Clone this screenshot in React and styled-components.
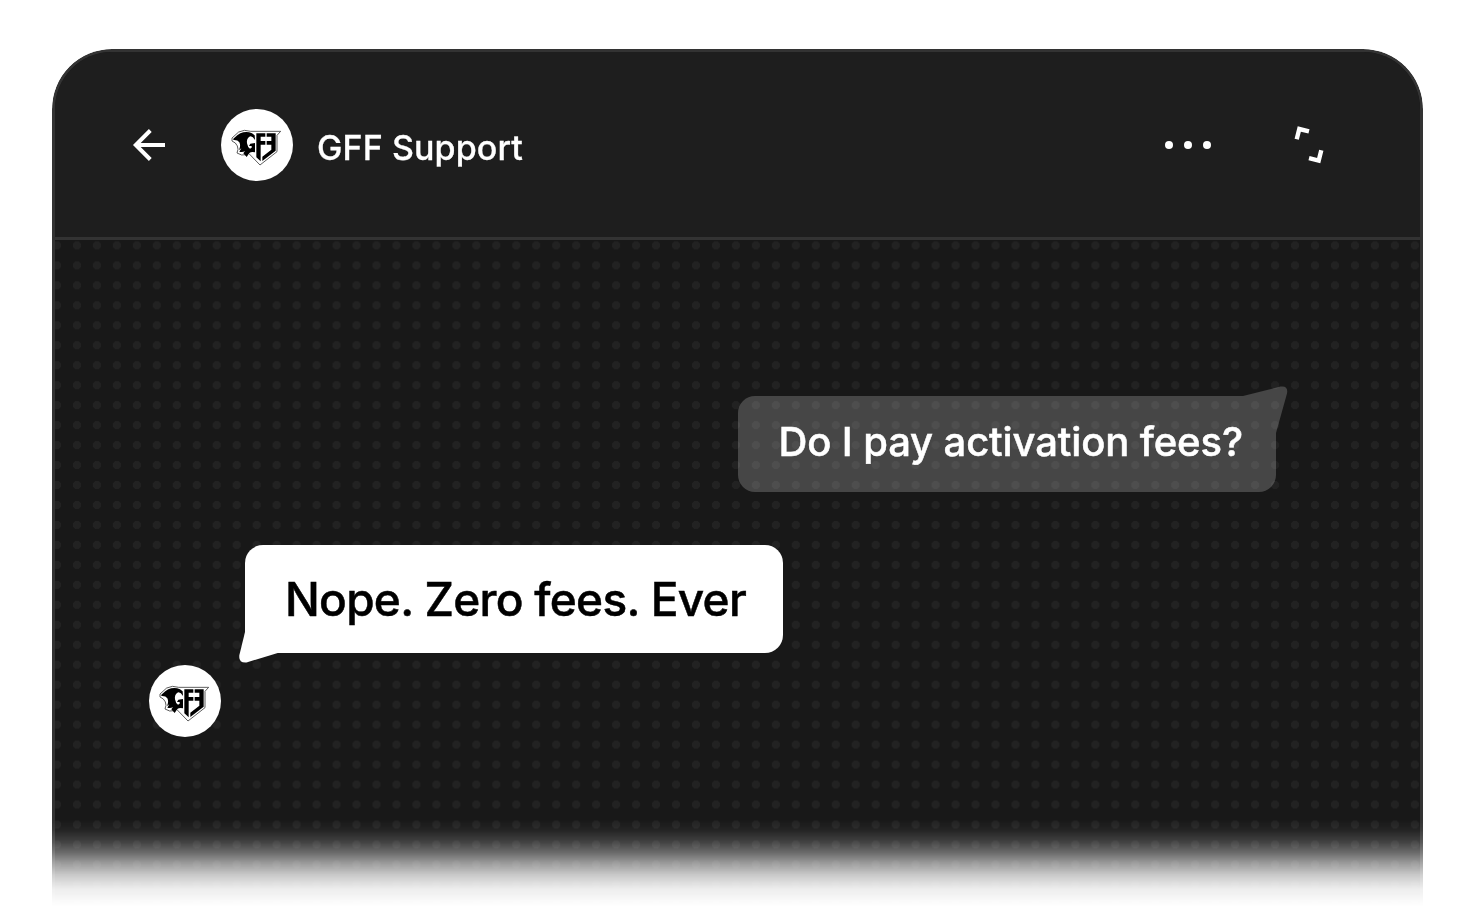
import styled, { createGlobalStyle } from "styled-components";

const GlobalStyle = createGlobalStyle`
  * {
    box-sizing: border-box;
  }
  body {
    margin: 0;
    background-color: #fff;
    font-family: Inter, "Liberation Sans", sans-serif;
    overflow: hidden;
  }
`

function Logo() {
  return (
    <LogoSvg viewBox="0 0 216 216">
      <path d="M179 67H89Q70 60 53 69L33 87V96L43 102Q51 110 51 121L48 132L62 138L76 137L83 133L117 168L168 128V79Z" fill="none" stroke="#333" strokeWidth="2.4" />
      <path d="M37 89Q48 78 58 73Q76 65 93 73L101 79L102 93Q94 79 85 83Q76 89 78 103Q80 115 87 119L92 116V111H84L88 104L102 102V130Q91 127 85 132L77 144L67 133L72 126Q65 131 55 128L61 118L54 123Q60 110 55 100Q50 92 37 93Z" />
      <path d="M106 73H133V83H119V96H133V107H119V157L106 145Z" />
      <path d="M137 73H164V125L124 156V143L151 122V107H137V96H151V83H137Z" />
    </LogoSvg>
  )
}

export default function App() {
  return (
    <>
      <GlobalStyle />
      <Page>
        <Phone>
          <Header>
            <BackIcon viewBox="0 0 34 34">
              <path d="M33 17H4M18.3 2.5L3.8 17L18.3 31.5" />
            </BackIcon>
            <Avatar><Logo /></Avatar>
            <Title>GFF Support</Title>
            <Dots>
              <span />
              <span />
              <span />
            </Dots>
            <ExpandIcon viewBox="0 0 30 38">
              <path d="M2.7 13.2L5.3 3L15 5.4M27.3 24.2L24.7 34.6L15 32.2" />
            </ExpandIcon>
          </Header>
          <Chat>
            <Question>
              Do I pay activation fees?
              <QuestionTail viewBox="0 0 45 47">
                <path d="M0 10L37.5 0.6Q45.5 -0.6 44 7.5L33 47V10Z" />
              </QuestionTail>
            </Question>
            <AnswerRow>
              <Avatar><Logo /></Avatar>
              <Answer>
                Nope. Zero fees. Ever
                <AnswerTail viewBox="0 0 45 34">
                  <path d="M6.5 0L0.4 25Q-0.8 33 7.5 32.4L42 22V0Z" />
                </AnswerTail>
              </Answer>
            </AnswerRow>
          </Chat>
        </Phone>
      </Page>
    </>
  )
}

const Page = styled.main`
  height: 912px;
  padding: 49px 52px 0;
  background-color: #fff;
`
const Phone = styled.section`
  height: 863px;
  display: flex;
  flex-direction: column;
  border: 3px solid #333;
  border-bottom: none;
  border-radius: 60px 60px 0 0;
  background-color: #181818;
  overflow: hidden;
  mask-image: linear-gradient(
    to bottom,
    #000 771px,
    rgba(0, 0, 0, 0.95) 781px,
    rgba(0, 0, 0, 0.82) 793px,
    rgba(0, 0, 0, 0.65) 803px,
    rgba(0, 0, 0, 0.44) 814px,
    rgba(0, 0, 0, 0.23) 826px,
    rgba(0, 0, 0, 0.08) 840px,
    transparent 857px
  );
`
const Header = styled.header`
  height: 188px;
  flex-shrink: 0;
  display: flex;
  align-items: center;
  padding: 0 96px 0 77px;
  background-color: #1e1e1e;
  border-bottom: 3px solid #333;
`
const BackIcon = styled.svg`
  width: 34px;
  height: 34px;
  margin-right: 55px;
  fill: none;
  stroke: #fff;
  stroke-width: 4;
`
const Avatar = styled.div`
  width: 72px;
  height: 72px;
  flex-shrink: 0;
  border-radius: 50%;
  background-color: #fff;
`
const LogoSvg = styled.svg`
  display: block;
  width: 72px;
  height: 72px;
`
const Title = styled.h1`
  margin: 6px auto 0 24px;
  font-size: 34px;
  font-weight: 500;
  line-height: 40px;
  letter-spacing: 0.1px;
  color: #fff;
  -webkit-text-stroke: 0.3px currentColor;
`
const Dots = styled.div`
  display: flex;
  gap: 11px;
  margin-right: 83px;

  span {
    width: 8px;
    height: 8px;
    border-radius: 50%;
    background-color: #fff;
  }
`
const ExpandIcon = styled.svg`
  width: 30px;
  height: 38px;
  fill: none;
  stroke: #fff;
  stroke-width: 4.4;
`
const Chat = styled.div`
  flex-grow: 1;
  display: flex;
  flex-direction: column;
  padding: 155.5px 144px 0 94px;
  background-image: radial-gradient(circle, #222 3.8px, transparent 4.4px);
  background-size: 19.975px 19.975px;
  background-position: -8px -4.6px;
`
const Bubble = styled.div`
  position: relative;
  width: 538.5px;
  font-weight: 500;
  white-space: nowrap;
  -webkit-text-stroke: 0.5px currentColor;
`
const Question = styled(Bubble)`
  align-self: flex-end;
  height: 96px;
  padding-left: 41px;
  border-radius: 17px 0 17px 17px;
  background-color: rgba(255, 255, 255, 0.2);
  color: #fff;
  font-size: 40px;
  line-height: 91px;
  letter-spacing: -0.12px;
`
const AnswerRow = styled.div`
  display: flex;
  align-items: flex-end;
  gap: 23.5px;
  margin-top: 53px;
`
const Answer = styled(Bubble)`
  height: 108px;
  margin-bottom: 84.5px;
  padding-left: 40.5px;
  border-radius: 18px 18px 18px 0;
  background-color: #fff;
  color: #000;
  font-size: 46px;
  line-height: 108px;
  letter-spacing: -0.72px;
`
const QuestionTail = styled.svg`
  position: absolute;
  top: -10px;
  right: -12px;
  width: 45px;
  height: 47px;
  fill: rgba(255, 255, 255, 0.2);
`
const AnswerTail = styled.svg`
  position: absolute;
  bottom: -11px;
  left: -6px;
  width: 45px;
  height: 34px;
  fill: #fff;
`
